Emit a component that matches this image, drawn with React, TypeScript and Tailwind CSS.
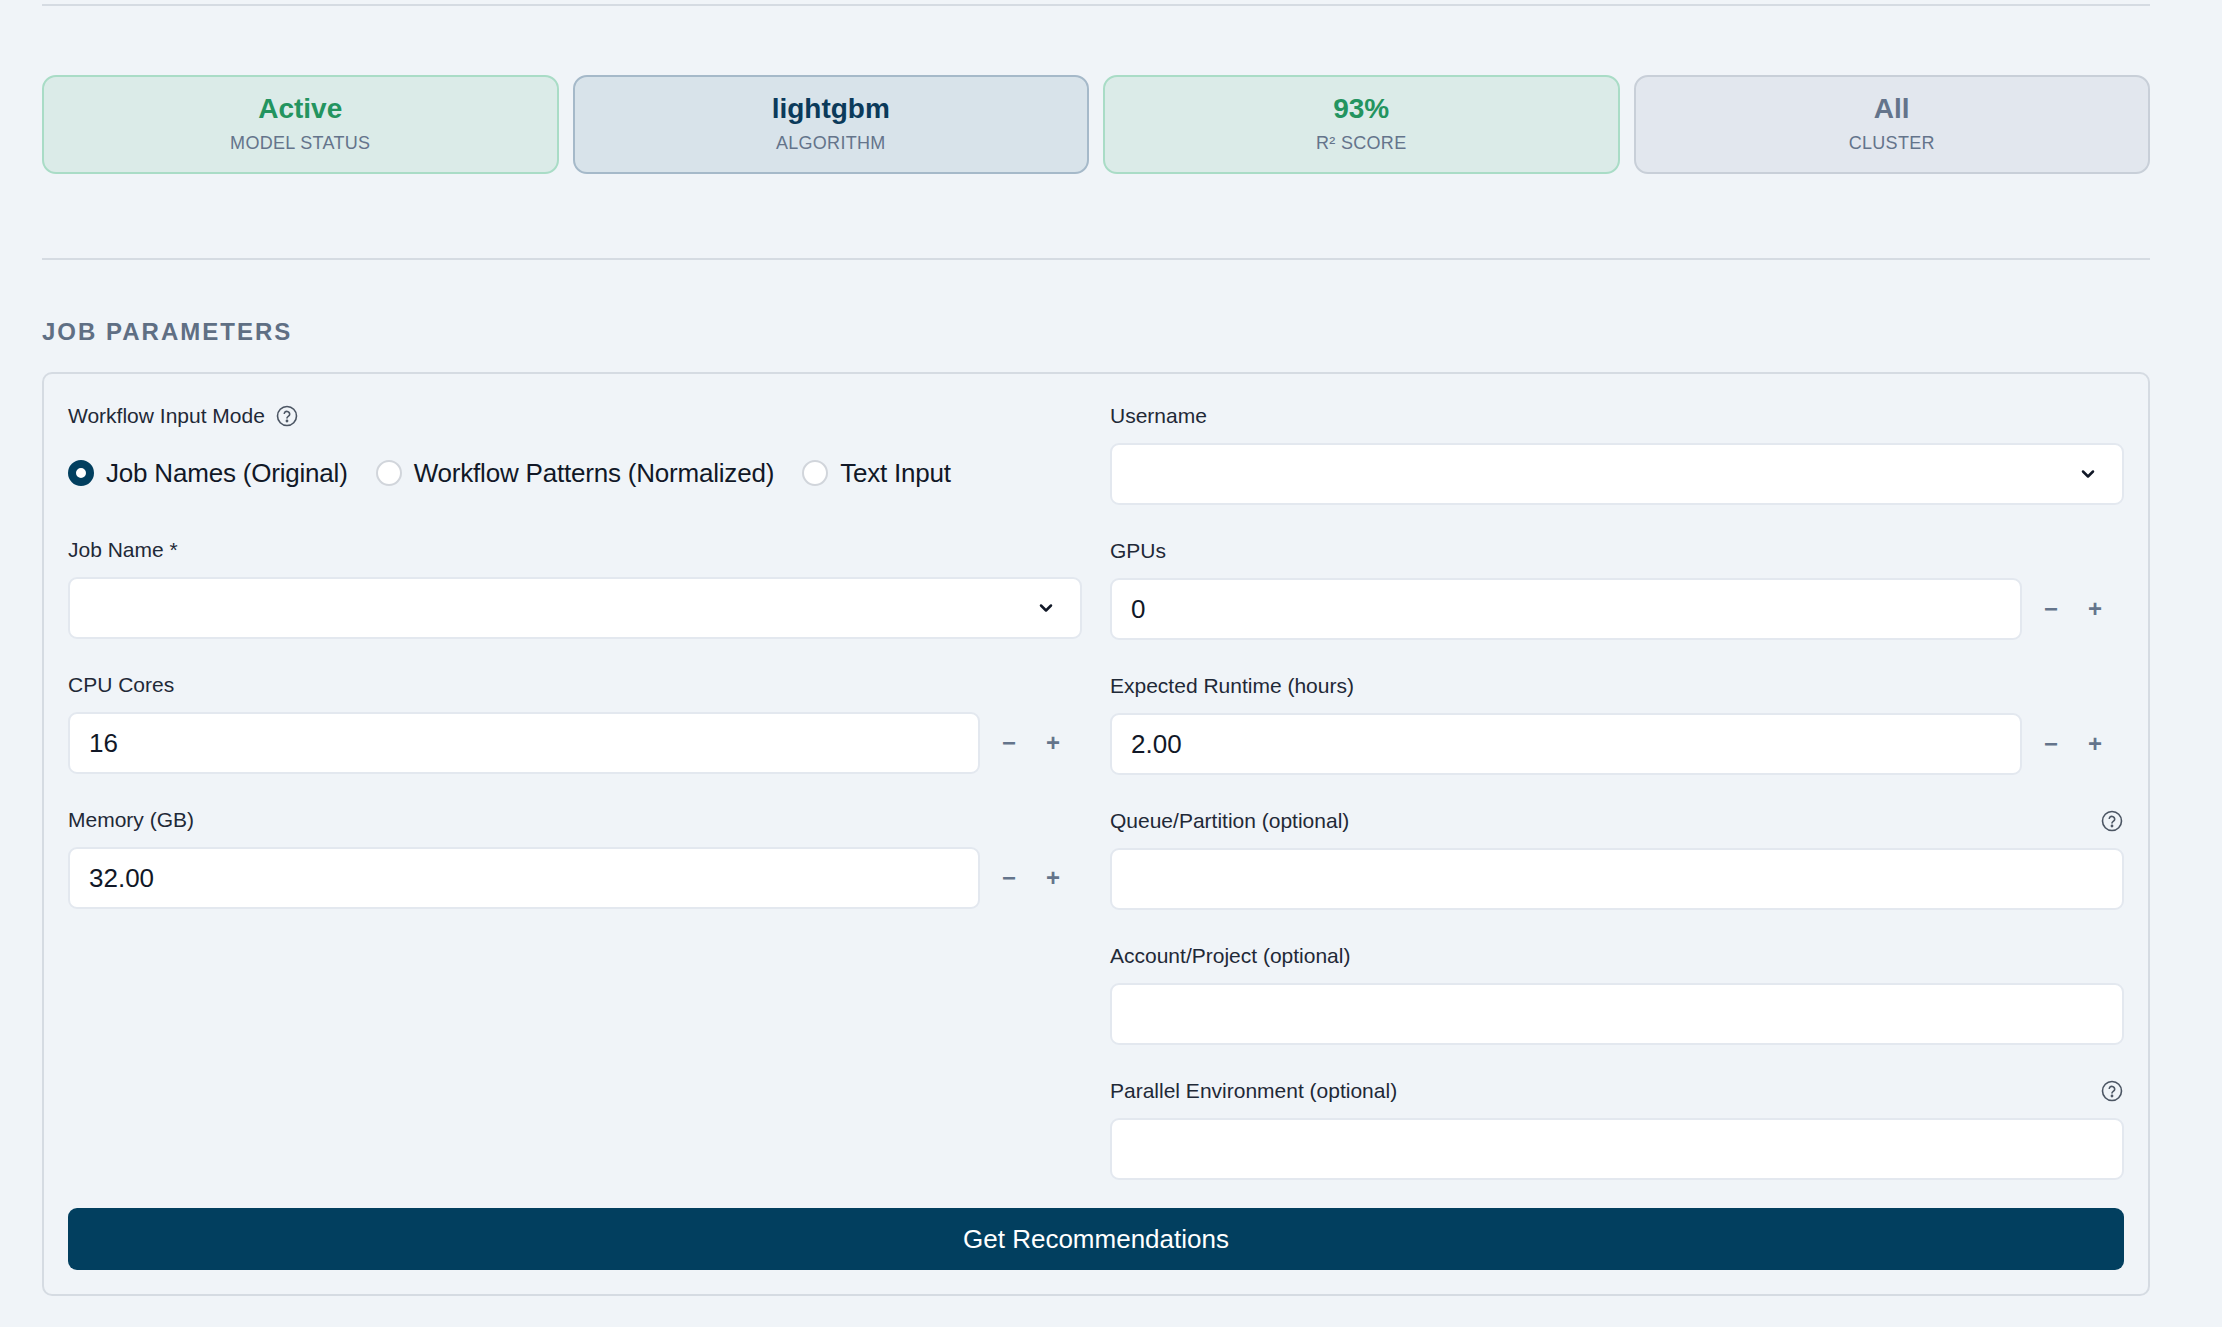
import React from "react";

const Help = () => (
  <svg width="24" height="24" viewBox="0 0 24 24" fill="none" stroke="#4b5563" strokeWidth="1.6" strokeLinecap="round" strokeLinejoin="round">
    <circle cx="12" cy="12" r="9.5" />
    <path d="M9.3 9.2a2.8 2.8 0 0 1 5.4 1c0 1.9-2.7 2.3-2.7 3.8" />
    <circle cx="12" cy="17" r="0.6" fill="#4b5563" />
  </svg>
);

const Chevron = () => (
  <svg width="20" height="20" viewBox="0 0 24 24" fill="none" stroke="#111827" strokeWidth="3" strokeLinecap="round" strokeLinejoin="round">
    <path d="M6 9l6 6 6-6" />
  </svg>
);

const Card = ({ v, l, cls, vcls }: { v: string; l: string; cls: string; vcls: string }) => (
  <div className={`flex-1 h-[99px] rounded-[14px] border-2 flex flex-col items-center justify-center ${cls}`}>
    <div className={`text-[28px] font-bold leading-[34px] ${vcls}`}>{v}</div>
    <div className="text-[18px] text-[#64748b] uppercase mt-[4px] tracking-[0.3px]">{l}</div>
  </div>
);

const Label = ({ t, help, inlineHelp }: { t: string; help?: boolean; inlineHelp?: boolean }) => (
  <div className="h-[30px] flex items-center justify-between text-[21px] text-[#1f2937]">
    <span className="flex items-center gap-[10px]">
      {t}
      {inlineHelp && <Help />}
    </span>
    {help && <Help />}
  </div>
);

const Box = ({ children }: { children?: React.ReactNode }) => (
  <div className="w-full flex-none h-[62px] bg-white rounded-[9px] border-2 border-[#e3e8ef] flex items-center px-[19px] text-[26px] text-[#111827]">
    {children}
  </div>
);

const Field = ({ t, help, inlineHelp, children }: { t: string; help?: boolean; inlineHelp?: boolean; children?: React.ReactNode }) => (
  <div className="flex flex-col gap-[12px]">
    <Label t={t} help={help} inlineHelp={inlineHelp} />
    {children}
  </div>
);

const Num = ({ v }: { v: string }) => (
  <div className="flex items-center">
    <div className="flex-1 min-w-0">
      <Box>{v}</Box>
    </div>
    <div className="w-[102px] flex items-center justify-center gap-[30px] text-[24px] text-[#64748b] font-bold">
      <span>−</span>
      <span>+</span>
    </div>
  </div>
);

const Select = () => (
  <div className="w-full flex-none h-[62px] bg-white rounded-[9px] border-2 border-[#e3e8ef] flex items-center justify-end px-[24px]">
    <Chevron />
  </div>
);

const Radio = ({ on, t }: { on?: boolean; t: string }) => (
  <div className="flex items-center gap-[12px]">
    {on ? (
      <div className="w-[26px] h-[26px] rounded-full border-[8px] border-[#023f5f] bg-white" />
    ) : (
      <div className="w-[26px] h-[26px] rounded-full border-2 border-[#d1d5db] bg-white" />
    )}
    <span className="text-[26px] text-[#111827] tracking-[-0.2px]">{t}</span>
  </div>
);

export default function App() {
  return (
    <div className="min-h-[1327px] bg-[#f0f4f8] px-[42px] pt-[4px]" style={{ fontFamily: '"Liberation Sans", Arial, sans-serif', width: 2222 }}>
      <div className="w-[2108px]">
        <div className="border-t-2 border-[#d5dbe2]" />
        <div className="flex gap-[14px] mt-[69px]">
          <Card v="Active" l="Model Status" cls="bg-[#dbebe8] border-[#a9dcc6]" vcls="text-[#23945f]" />
          <Card v="lightgbm" l="Algorithm" cls="bg-[#d8e3ea] border-[#a5b9c9]" vcls="text-[#0b3a5a]" />
          <Card v="93%" l="R² Score" cls="bg-[#dbebe8] border-[#a9dcc6]" vcls="text-[#23945f]" />
          <Card v="All" l="Cluster" cls="bg-[#e2e7ee] border-[#c8cfd8]" vcls="text-[#64748b]" />
        </div>
        <div className="border-t-2 border-[#d5dbe2] mt-[84px]" />
        <div className="mt-[54px] text-[24px] font-bold tracking-[2px] text-[#5f6f84]">JOB PARAMETERS</div>
        <div className="mt-[22px] border-2 border-[#d5dbe2] rounded-[10px] px-[24px] pt-[27px] pb-[24px]">
          <div className="grid grid-cols-2 gap-x-[28px]">
            <div className="flex flex-col gap-[31px]">
              <Field t="Workflow Input Mode" inlineHelp>
                <div className="h-[62px] flex items-center gap-[28px] -mt-[1px]">
                  <Radio on t="Job Names (Original)" />
                  <Radio t="Workflow Patterns (Normalized)" />
                  <Radio t="Text Input" />
                </div>
              </Field>
              <Field t="Job Name *"><Select /></Field>
              <Field t="CPU Cores"><Num v="16" /></Field>
              <Field t="Memory (GB)"><Num v="32.00" /></Field>
            </div>
            <div className="flex flex-col gap-[31px]">
              <Field t="Username"><Select /></Field>
              <Field t="GPUs"><Num v="0" /></Field>
              <Field t="Expected Runtime (hours)"><Num v="2.00" /></Field>
              <Field t="Queue/Partition (optional)" help><Box /></Field>
              <Field t="Account/Project (optional)"><Box /></Field>
              <Field t="Parallel Environment (optional)" help><Box /></Field>
            </div>
          </div>
          <button className="mt-[28px] w-full h-[62px] rounded-[9px] bg-[#023f5f] text-white text-[26px]">Get Recommendations</button>
        </div>
      </div>
    </div>
  );
}
